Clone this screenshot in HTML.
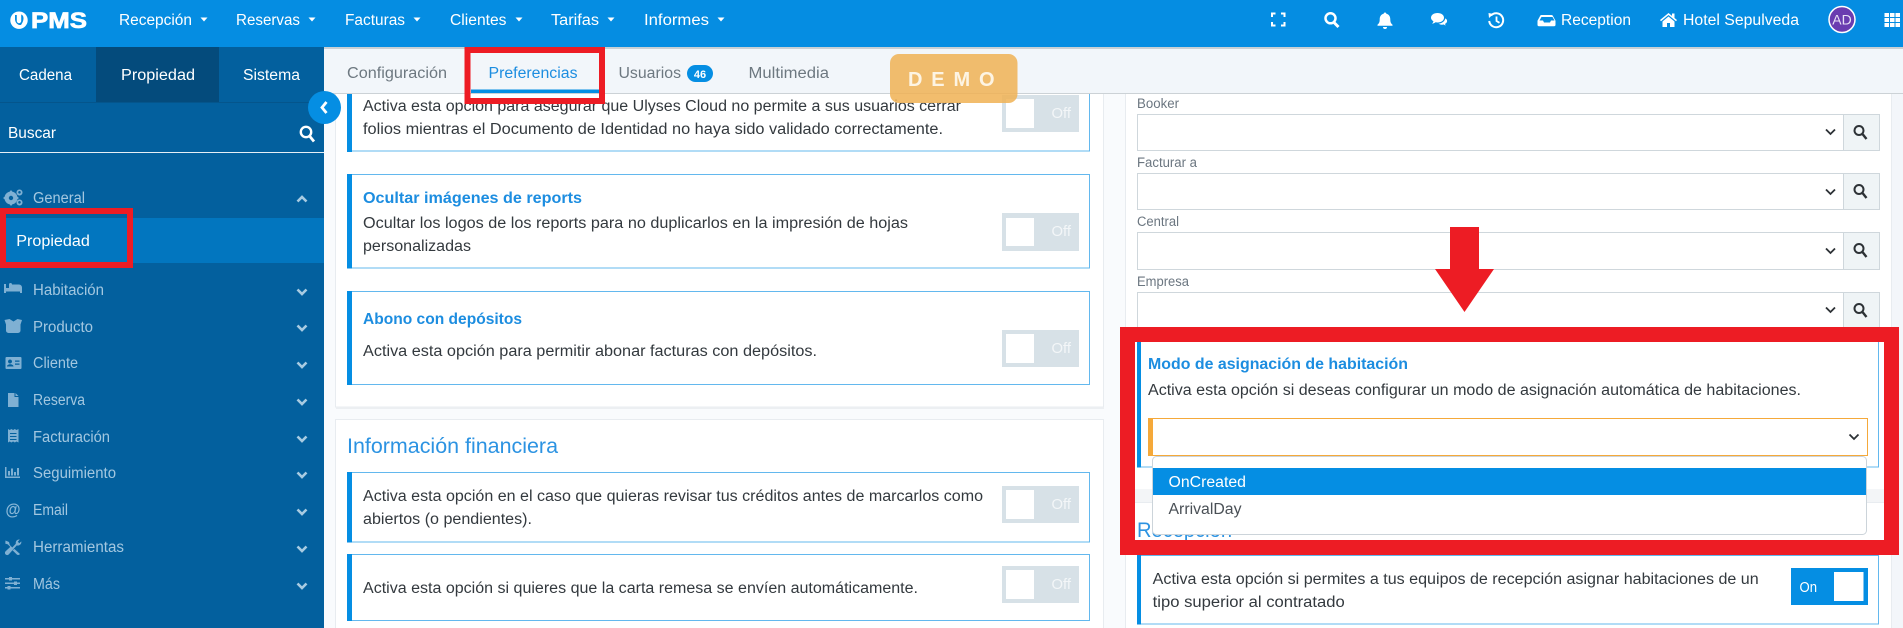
<!DOCTYPE html>
<html lang="es">
<head>
<meta charset="utf-8">
<title>PMS Preferencias</title>
<style>
html,body{margin:0;padding:0;width:1903px;height:628px;overflow:hidden;background:#f9fbfd}
svg{display:block;font-family:"Liberation Sans",sans-serif}
.n{font-size:15.5px;fill:#fff}
.m{font-size:15.5px;fill:#a3c7e0}
.b{font-size:15.5px;fill:#33393e}
.h{font-size:15.5px;font-weight:700;fill:#1c8de0}
.tab{font-size:15.5px;fill:#6d7880}
.off{font-size:15px;fill:#f3f6f8}
.l{font-size:13.5px;fill:#6b7680}
.sec{font-size:21.5px;fill:#2c93e2}
.box{fill:#fff;stroke:#63b8ee;stroke-width:1}
.ed{fill:#058ee3}
.fld{fill:#fff;stroke:#cfd7dc;stroke-width:1}
.btn{fill:#eff4f6;stroke:#cfd7dc;stroke-width:1}
.cv{fill:none;stroke:#a8cbe2;stroke-width:2.6}
.dc{fill:none;stroke:#2d3236;stroke-width:1.8}
.ic{fill:#7fb0d3}
</style>
</head>
<body>
<svg xmlns="http://www.w3.org/2000/svg" width="1903" height="628" viewBox="0 0 1903 628">
<defs>
<path id="cvd" d="M-4.5-2.5L0 2L4.5-2.5"/>
<path id="car" d="M-3.5-2H3.5L0 2Z" fill="#fff"/>
<g id="srch" fill="none" stroke="#2d3236" stroke-width="2"><circle cx="-1.5" cy="-1.5" r="4.5"/><path d="M2 2L6 7" stroke-width="2.4"/></g>
</defs>

<!-- page -->
<rect width="1903" height="628" fill="#f9fbfd"/>
<rect x="1892" y="48" width="11" height="580" fill="#f3f6fa"/>

<!-- left cards -->
<rect x="335.5" y="60" width="768" height="347" fill="#fff" stroke="#e8ecf0"/>
<rect x="336" y="407" width="768" height="2" fill="#eceff2"/>
<rect x="335.5" y="419.5" width="768" height="230" fill="#fff" stroke="#e8ecf0"/>

<!-- box 1 -->
<rect class="box" x="347.5" y="60" width="742" height="91"/><rect class="ed" x="347" y="60" width="5" height="92"/>
<text class="b" x="363" y="111" textLength="598" lengthAdjust="spacingAndGlyphs">Activa esta opción para asegurar que Ulyses Cloud no permite a sus usuarios cerrar</text>
<text class="b" x="363" y="134" textLength="580" lengthAdjust="spacingAndGlyphs">folios mientras el Documento de Identidad no haya sido validado correctamente.</text>
<rect x="1002" y="95" width="77" height="37" fill="#d7e1e7"/><rect x="1006" y="99" width="28" height="29" fill="#fff"/>
<text class="off" x="1051.5" y="118" textLength="19.5" lengthAdjust="spacingAndGlyphs">Off</text>

<!-- box 2 -->
<rect class="box" x="347.5" y="174.5" width="742" height="93.5"/><rect class="ed" x="347" y="174" width="5" height="94.5"/>
<text class="h" x="363" y="203" textLength="219" lengthAdjust="spacingAndGlyphs">Ocultar imágenes de reports</text>
<text class="b" x="363" y="228" textLength="545" lengthAdjust="spacingAndGlyphs">Ocultar los logos de los reports para no duplicarlos en la impresión de hojas</text>
<text class="b" x="363" y="251" textLength="108" lengthAdjust="spacingAndGlyphs">personalizadas</text>
<rect x="1002" y="213" width="77" height="38" fill="#d7e1e7"/><rect x="1006" y="218" width="28" height="28" fill="#fff"/>
<text class="off" x="1051.5" y="236" textLength="19.5" lengthAdjust="spacingAndGlyphs">Off</text>

<!-- box 3 -->
<rect class="box" x="347.5" y="291.5" width="742" height="93"/><rect class="ed" x="347" y="291" width="5" height="94"/>
<text class="h" x="363" y="324" textLength="159" lengthAdjust="spacingAndGlyphs">Abono con depósitos</text>
<text class="b" x="363" y="356" textLength="454" lengthAdjust="spacingAndGlyphs">Activa esta opción para permitir abonar facturas con depósitos.</text>
<rect x="1002" y="330" width="77" height="37" fill="#d7e1e7"/><rect x="1006" y="334" width="28" height="29" fill="#fff"/>
<text class="off" x="1051.5" y="353" textLength="19.5" lengthAdjust="spacingAndGlyphs">Off</text>

<!-- Información financiera -->
<text class="sec" x="347" y="453" textLength="211" lengthAdjust="spacingAndGlyphs">Información financiera</text>
<rect class="box" x="347.5" y="472.5" width="742" height="69.5"/><rect class="ed" x="347" y="472" width="5" height="70.5"/>
<text class="b" x="363" y="501" textLength="620" lengthAdjust="spacingAndGlyphs">Activa esta opción en el caso que quieras revisar tus créditos antes de marcarlos como</text>
<text class="b" x="363" y="524" textLength="169" lengthAdjust="spacingAndGlyphs">abiertos (o pendientes).</text>
<rect x="1002" y="486" width="77" height="37" fill="#d7e1e7"/><rect x="1006" y="490" width="28" height="29" fill="#fff"/>
<text class="off" x="1051.5" y="509" textLength="19.5" lengthAdjust="spacingAndGlyphs">Off</text>

<rect class="box" x="347.5" y="554.5" width="742" height="66"/><rect class="ed" x="347" y="554" width="5" height="67"/>
<text class="b" x="363" y="593" textLength="555" lengthAdjust="spacingAndGlyphs">Activa esta opción si quieres que la carta remesa se envíen automáticamente.</text>
<rect x="1002" y="566" width="77" height="37" fill="#d7e1e7"/><rect x="1006" y="570" width="28" height="29" fill="#fff"/>
<text class="off" x="1051.5" y="589" textLength="19.5" lengthAdjust="spacingAndGlyphs">Off</text>

<!-- right card -->
<rect x="1125.5" y="60" width="766" height="430" fill="#fff" stroke="#e8ecf0"/>
<rect x="1125" y="490" width="767" height="12" fill="#f3f5f7"/>
<rect x="1125.5" y="502.5" width="766" height="140" fill="#fff" stroke="#e8ecf0"/>

<text class="l" x="1137" y="108" textLength="42" lengthAdjust="spacingAndGlyphs">Booker</text>
<rect class="fld" x="1137.5" y="114.5" width="742" height="36"/><rect class="btn" x="1843.5" y="114.5" width="36" height="36"/>
<use href="#cvd" class="dc" x="1830.5" y="132"/><use href="#srch" x="1860.5" y="132"/>

<text class="l" x="1137" y="167" textLength="60" lengthAdjust="spacingAndGlyphs">Facturar a</text>
<rect class="fld" x="1137.5" y="173.5" width="742" height="36"/><rect class="btn" x="1843.5" y="173.5" width="36" height="36"/>
<use href="#cvd" class="dc" x="1830.5" y="192"/><use href="#srch" x="1860.5" y="191"/>

<text class="l" x="1137" y="226" textLength="42" lengthAdjust="spacingAndGlyphs">Central</text>
<rect class="fld" x="1137.5" y="232.5" width="742" height="37"/><rect class="btn" x="1843.5" y="232.5" width="36" height="37"/>
<use href="#cvd" class="dc" x="1830.5" y="251"/><use href="#srch" x="1860.5" y="250"/>

<text class="l" x="1137" y="286" textLength="52" lengthAdjust="spacingAndGlyphs">Empresa</text>
<rect class="fld" x="1137.5" y="292.5" width="742" height="37"/><rect class="btn" x="1843.5" y="292.5" width="36" height="37"/>
<use href="#cvd" class="dc" x="1830.5" y="310"/><use href="#srch" x="1860.5" y="310"/>

<!-- Modo de asignación -->
<rect class="box" x="1137.5" y="330.5" width="741" height="136.5"/><rect class="ed" x="1137" y="330" width="4" height="137.5"/>
<text class="h" x="1148" y="369" textLength="260" lengthAdjust="spacingAndGlyphs">Modo de asignación de habitación</text>
<text class="b" x="1148" y="395" textLength="653" lengthAdjust="spacingAndGlyphs">Activa esta opción si deseas configurar un modo de asignación automática de habitaciones.</text>
<rect x="1148.5" y="418.5" width="719" height="37" fill="#fff" stroke="#f5a93a"/><rect x="1148" y="418" width="5" height="38" fill="#f5a93a"/>
<use href="#cvd" class="dc" x="1854" y="437"/>

<!-- Recepción -->
<text class="sec" x="1137" y="537" textLength="95" lengthAdjust="spacingAndGlyphs">Recepción</text>
<rect class="box" x="1137.5" y="555.5" width="741" height="68.5"/><rect class="ed" x="1137" y="555" width="4" height="69.5"/>
<text class="b" x="1152.7" y="584" textLength="606" lengthAdjust="spacingAndGlyphs">Activa esta opción si permites a tus equipos de recepción asignar habitaciones de un</text>
<text class="b" x="1152.7" y="607" textLength="192" lengthAdjust="spacingAndGlyphs">tipo superior al contratado</text>
<rect x="1791" y="568" width="77" height="37" fill="#058ee3"/><rect x="1834" y="572" width="29.5" height="29" fill="#fff"/>
<text x="1799.5" y="592" font-size="15" fill="#fff" textLength="17.5" lengthAdjust="spacingAndGlyphs">On</text>

<!-- dropdown -->
<rect x="1152.5" y="456.5" width="714" height="78" rx="4" fill="#fff" stroke="#ccd4da"/>
<rect x="1153" y="468" width="713" height="27" fill="#058ee3"/>
<text x="1168.5" y="487" font-size="15.5" fill="#fff" textLength="77.5" lengthAdjust="spacingAndGlyphs">OnCreated</text>
<text x="1168.5" y="514" font-size="15.5" fill="#4a5056" textLength="73" lengthAdjust="spacingAndGlyphs">ArrivalDay</text>

<!-- tabs bar -->
<rect x="324" y="48" width="1579" height="45" fill="#f2f6fa"/>
<rect x="324" y="93" width="1579" height="1" fill="#ccd2d6"/>
<rect x="324" y="47" width="1579" height="2" fill="#c9d0d5"/>
<text class="tab" x="347" y="78" textLength="100" lengthAdjust="spacingAndGlyphs">Configuración</text>
<text x="488.5" y="78" font-size="15.5" fill="#1c8de0" textLength="89" lengthAdjust="spacingAndGlyphs">Preferencias</text>
<rect x="471" y="89.5" width="128.5" height="3.5" fill="#058ee3"/>
<text class="tab" x="618.5" y="78" textLength="62.5" lengthAdjust="spacingAndGlyphs">Usuarios</text>
<rect x="687" y="65" width="26" height="17" rx="8.5" fill="#058ee3"/>
<text x="700" y="78" font-size="11" font-weight="700" fill="#fff" text-anchor="middle">46</text>
<text class="tab" x="748.5" y="78" textLength="80.5" lengthAdjust="spacingAndGlyphs">Multimedia</text>

<!-- DEMO -->
<rect x="890" y="54" width="127.5" height="49" rx="9" fill="#f0b253" fill-opacity=".85"/>
<text x="908" y="86" font-size="20" font-weight="700" fill="#fdf4e3" textLength="86.5">DEMO</text>

<!-- sidebar -->
<rect x="0" y="47" width="324" height="581" fill="#03609e"/>
<rect x="96" y="47" width="123" height="55" fill="#044b7c"/>
<rect x="0" y="102" width="324" height="1" fill="#04558c"/>
<text class="n" x="19" y="80" textLength="53" lengthAdjust="spacingAndGlyphs">Cadena</text>
<text class="n" x="121" y="80" textLength="74" lengthAdjust="spacingAndGlyphs">Propiedad</text>
<text class="n" x="243" y="80" textLength="57" lengthAdjust="spacingAndGlyphs">Sistema</text>

<text x="8" y="138" font-size="16" fill="#fff" textLength="48" lengthAdjust="spacingAndGlyphs">Buscar</text>
<g fill="none" stroke="#fff"><circle cx="306" cy="132" r="5.2" stroke-width="2.4"/><path d="M309.5 136L314 141.5" stroke-width="2.8"/></g>
<rect x="0" y="152" width="324" height="1" fill="#e6eff6"/>

<rect x="0" y="218" width="324" height="45" fill="#0276bf"/>
<text x="16.3" y="246" font-size="15.5" fill="#fff" textLength="73.5" lengthAdjust="spacingAndGlyphs">Propiedad</text>

<!-- menu -->
<g>
<text class="m" x="33" y="203" textLength="52" lengthAdjust="spacingAndGlyphs">General</text>
<text class="m" x="33" y="295" textLength="71" lengthAdjust="spacingAndGlyphs">Habitación</text>
<text class="m" x="33" y="332" textLength="60" lengthAdjust="spacingAndGlyphs">Producto</text>
<text class="m" x="33" y="368" textLength="45" lengthAdjust="spacingAndGlyphs">Cliente</text>
<text class="m" x="33" y="405" textLength="52" lengthAdjust="spacingAndGlyphs">Reserva</text>
<text class="m" x="33" y="442" textLength="77" lengthAdjust="spacingAndGlyphs">Facturación</text>
<text class="m" x="33" y="478" textLength="83" lengthAdjust="spacingAndGlyphs">Seguimiento</text>
<text class="m" x="33" y="515" textLength="35" lengthAdjust="spacingAndGlyphs">Email</text>
<text class="m" x="33" y="552" textLength="91" lengthAdjust="spacingAndGlyphs">Herramientas</text>
<text class="m" x="33" y="589" textLength="27" lengthAdjust="spacingAndGlyphs">Más</text>
<path class="cv" d="M297.5 201.5L302 197L306.5 201.5"/>
<use href="#cvd" class="cv" x="302" y="292"/>
<use href="#cvd" class="cv" x="302" y="328"/>
<use href="#cvd" class="cv" x="302" y="365"/>
<use href="#cvd" class="cv" x="302" y="402"/>
<use href="#cvd" class="cv" x="302" y="439"/>
<use href="#cvd" class="cv" x="302" y="475"/>
<use href="#cvd" class="cv" x="302" y="512"/>
<use href="#cvd" class="cv" x="302" y="549"/>
<use href="#cvd" class="cv" x="302" y="586"/>
</g>

<!-- menu icons -->
<g class="ic">
<circle cx="11" cy="198" r="6.5"/><circle cx="11" cy="198" r="2.2" fill="#03609e"/>
<path d="M11 190l1.5 2h-3zM11 206l1.5-2h-3zM3 198l2-1.500v3zM19 198l-2-1.500v3z"/>
<path fill-rule="evenodd" d="M19.5 189.500a3 3 0 1 0 .01 0zM19.500 191a1.300 1.300 0 1 1-.01 0zM19.500 199.500a3 3 0 1 0 .01 0zM19.500 201a1.300 1.300 0 1 1-.01 0z"/>
<path d="M4 284h2v4h3v-3.500a1.500 1.500 0 0 1 3 0h7a3 3 0 0 1 3 3v5.500h-2v-1.500H6v1.500H4z"/>
<path d="M4.500 320l5-1 4 2.500 4-2.500 4.500 1-1.500 4.500v6a2.500 2.500 0 0 1-2.500 2.500H8.500a2.500 2.500 0 0 1-2.500-2.500v-6z"/>
<path fill-rule="evenodd" d="M6.500 357h14a1 1 0 0 1 1 1v10a1 1 0 0 1-1 1h-14a1 1 0 0 1-1-1v-10a1 1 0 0 1 1-1zM10 359.500a2 2 0 1 0 .01 0zM7 366.500h6.500c0-3-6.500-3-6.500 0zM15 360.500v1.300h4.500v-1.300zM15 363.500v1.300h4.500v-1.300z"/>
<path d="M8 393h6.500v4h4v10H8zM15.500 393l3 3h-3z"/>
<path fill-rule="evenodd" d="M8 429l1.700 1 1.700-1 1.700 1 1.700-1 1.700 1 2-1v13.500l-2-1-1.700 1-1.700-1-1.700 1-1.700-1L8 442.500zM10 433v1h6.500v-1zM10 436v1h6.500v-1zM10 439v1h6.500v-1z"/>
<path d="M5 467h1.500v9.500H20v1.500H5zM8 471h2v4.500H8zM11 468.500h2v7h-2zM14 472h2v3.500h-2zM17 468h2v7.500h-2z"/>
<text x="5.500" y="515" font-size="17" font-weight="700" fill="#8ab8d8" textLength="15" lengthAdjust="spacingAndGlyphs">@</text>
<path d="M5.500 540.500l3.500 1.500.8 3 2.500 2.500 3.500-3.800a3.500 3.500 0 0 1 4-4.200l-2 2.200 1.500 1.500 2-1.800a3.500 3.500 0 0 1-4.500 4l-8 9a2.200 2.200 0 0 1-3.300-3l4.800-4.500-2.500-2.500-2.500-.8zM14.500 549l5.500 5a2.200 2.200 0 0 1-3.200.5l-4.300-4.300z"/>
<path d="M5 578h4v-1h3v1h8v1.500h-8v1h-3v-1H5zM5 582.500h9v-1h3v1h3v1.500h-3v1h-3v-1H5zM5 587h2.500v-1h3v1H20v1.500h-9.500v1h-3v-1H5z"/>
</g>

<!-- collapse btn -->
<ellipse cx="324.500" cy="107.500" rx="16.500" ry="16.500" fill="#058ee3"/>
<path d="M326.500 102L322 107.500L326.500 113" fill="none" stroke="#fff" stroke-width="2.800"/>

<!-- header -->
<rect x="0" y="0" width="1903" height="47" fill="#058de2"/>
<g fill="#fff">
<path fill-rule="evenodd" d="M19 11.500a8.700 8.700 0 1 0 .01 0zM15 15h1.800v6a2.200 2.200 0 0 0 4.400 0v-6.500c1.500.5 2.300 1.800 2.300 3.800 0 2.500-1.200 5-2.500 6.700h-2c-2.500-1-4-3.500-4-6z"/>
<text x="31" y="28" font-size="22" font-weight="700" textLength="56" lengthAdjust="spacingAndGlyphs" stroke="#fff" stroke-width=".7">PMS</text>
</g>
<text class="n" x="119" y="25" textLength="73" lengthAdjust="spacingAndGlyphs">Recepción</text><use href="#car" x="204" y="19.500"/>
<text class="n" x="236" y="25" textLength="64" lengthAdjust="spacingAndGlyphs">Reservas</text><use href="#car" x="312" y="19.500"/>
<text class="n" x="345" y="25" textLength="60" lengthAdjust="spacingAndGlyphs">Facturas</text><use href="#car" x="417" y="19.500"/>
<text class="n" x="450" y="25" textLength="56.500" lengthAdjust="spacingAndGlyphs">Clientes</text><use href="#car" x="519" y="19.500"/>
<text class="n" x="551" y="25" textLength="48" lengthAdjust="spacingAndGlyphs">Tarifas</text><use href="#car" x="611" y="19.500"/>
<text class="n" x="644" y="25" textLength="65" lengthAdjust="spacingAndGlyphs">Informes</text><use href="#car" x="721" y="19.500"/>

<!-- header right icons -->
<path d="M1272 17v-3.500h3.500M1281 13.500h3.500V17M1284.500 22v3.500H1281M1275.500 25.500H1272V22" fill="none" stroke="#fff" stroke-width="2"/>
<g fill="none" stroke="#fff"><circle cx="1330.500" cy="18.300" r="5" stroke-width="2.500"/><path d="M1334 22.500L1338.500 27" stroke-width="3"/></g>
<path fill="#fff" d="M1385 12.500a1.300 1.300 0 0 1 1.300 1.300c2.700.6 4 2.800 4 5.700 0 3 .8 4 2.200 5.200v1h-15v-1c1.400-1.200 2.200-2.200 2.200-5.200 0-2.900 1.300-5.100 4-5.700a1.300 1.300 0 0 1 1.300-1.300zM1383 27h4a2 2 0 0 1-4 0z"/>
<path fill="#fff" d="M1437.500 13c3.800 0 6.500 2 6.500 4.800s-2.700 4.700-6.500 4.700c-.7 0-1.300 0-1.900-.2-1 .8-2.300 1.300-3.600 1.400.8-.8 1.300-1.700 1.400-2.500-1.500-.8-2.400-2-2.400-3.400 0-2.800 2.700-4.800 6.500-4.800z"/>
<path fill="#fff" stroke="#058de2" stroke-width="1" d="M1444.800 17.500c1.700.7 2.800 2 2.800 3.500 0 1.300-.8 2.400-2 3.100.1.800.5 1.500 1.200 2.200-1.200-.1-2.300-.6-3.100-1.300-.5.100-1 .2-1.600.2-2 0-3.700-.8-4.600-2 4.200 0 7.300-2.300 7.300-5.700z"/>
<g fill="none" stroke="#fff"><path d="M1491 15.500a7 7 0 1 1-1.800 5.500" stroke-width="2"/><path d="M1496.500 16.500v4.500l3 1.800" stroke-width="1.800"/></g>
<path fill="#fff" d="M1488.500 13l5 1-4.500 4z"/>
<path fill="#fff" fill-rule="evenodd" d="M1541 15h10.500a1.500 1.500 0 0 1 1.300.7l2.700 5v4a1.500 1.500 0 0 1-1.500 1.500h-15a1.500 1.500 0 0 1-1.500-1.500v-4l2.700-5a1.500 1.500 0 0 1 1.300-.7zM1541.500 17l-2 3.500h3.500l1 2h6l1-2h3.500l-2-3.500z"/>
<text class="n" x="1561" y="25" textLength="70" lengthAdjust="spacingAndGlyphs">Reception</text>
<path fill="#fff" d="M1668.500 13l3.500 2.900V13.500h2.500v4.500l2.500 2-1 1.200-7.500-6.200-7.500 6.200-1-1.200zM1668.500 16.500l6 5v5.500h-4.500v-4h-3v4h-4.500v-5.500z"/>
<text class="n" x="1683" y="25" textLength="116" lengthAdjust="spacingAndGlyphs">Hotel Sepulveda</text>
<circle cx="1842" cy="19.500" r="13" fill="#6a3cb0" stroke="#fff" stroke-width="1.500"/>
<text x="1842" y="24.500" font-size="14" fill="#e9e1f6" text-anchor="middle">AD</text>
<g fill="#fff">
<rect x="1884.500" y="13" width="4.500" height="4"/><rect x="1890" y="13" width="4.500" height="4"/><rect x="1895.500" y="13" width="4.500" height="4"/>
<rect x="1884.500" y="18" width="4.500" height="4"/><rect x="1890" y="18" width="4.500" height="4"/><rect x="1895.500" y="18" width="4.500" height="4"/>
<rect x="1884.500" y="23" width="4.500" height="4"/><rect x="1890" y="23" width="4.500" height="4"/><rect x="1895.500" y="23" width="4.500" height="4"/>
</g>

<!-- red annotations -->
<g fill="none" stroke="#ed1c24">
<rect x="467.500" y="50" width="134.500" height="51" stroke-width="6"/>
<rect x="3" y="211" width="127" height="54" stroke-width="6"/>
<rect x="1127.500" y="334.500" width="764" height="213" stroke-width="15"/>
</g>
<path fill="#ed1c24" d="M1450 227H1479V269H1494L1464.500 312L1435 269H1450Z"/>
</svg>
</body>
</html>
